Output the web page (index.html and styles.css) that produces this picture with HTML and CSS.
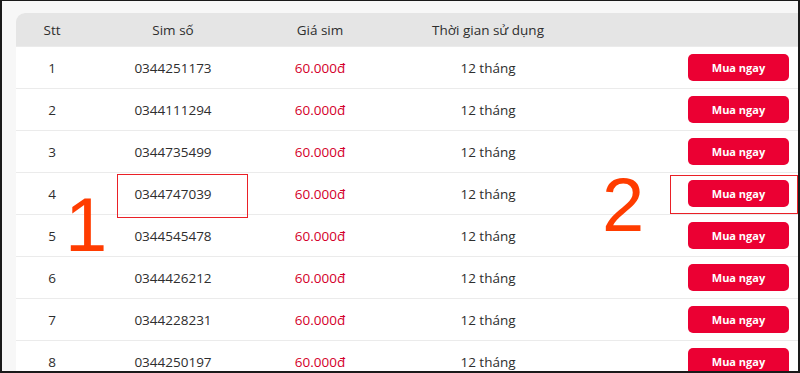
FILE: index.html
```html
<!DOCTYPE html>
<html lang="vi">
<head>
<meta charset="utf-8">
<link rel="stylesheet" href="styles.css">
</head>
<body>
<div class="frame">
  <div class="card">
    <div class="row head">
      <div class="c">Stt</div>
      <div class="c">Sim số</div>
      <div class="c">Giá sim</div>
      <div class="c">Thời gian sử dụng</div>
      <div class="c"></div>
    </div>
    <div class="row"><div class="c">1</div><div class="c">0344251173</div><div class="c price">60.000đ</div><div class="c">12 tháng</div><div class="c act"><span class="btn">Mua ngay</span></div></div>
    <div class="row"><div class="c">2</div><div class="c">0344111294</div><div class="c price">60.000đ</div><div class="c">12 tháng</div><div class="c act"><span class="btn">Mua ngay</span></div></div>
    <div class="row"><div class="c">3</div><div class="c">0344735499</div><div class="c price">60.000đ</div><div class="c">12 tháng</div><div class="c act"><span class="btn">Mua ngay</span></div></div>
    <div class="row"><div class="c">4</div><div class="c">0344747039</div><div class="c price">60.000đ</div><div class="c">12 tháng</div><div class="c act"><span class="btn">Mua ngay</span></div></div>
    <div class="row"><div class="c">5</div><div class="c">0344545478</div><div class="c price">60.000đ</div><div class="c">12 tháng</div><div class="c act"><span class="btn">Mua ngay</span></div></div>
    <div class="row"><div class="c">6</div><div class="c">0344426212</div><div class="c price">60.000đ</div><div class="c">12 tháng</div><div class="c act"><span class="btn">Mua ngay</span></div></div>
    <div class="row"><div class="c">7</div><div class="c">0344228231</div><div class="c price">60.000đ</div><div class="c">12 tháng</div><div class="c act"><span class="btn">Mua ngay</span></div></div>
    <div class="row"><div class="c">8</div><div class="c">0344250197</div><div class="c price">60.000đ</div><div class="c">12 tháng</div><div class="c act"><span class="btn">Mua ngay</span></div></div>
  </div>
  <div class="mark box1"></div>
  <div class="mark box2"></div>
  <div class="num n1">1</div>
  <div class="num n2">2</div>
</div>
</body>
</html>
```

FILE: styles.css
```css
* { box-sizing: border-box; }
html, body { margin: 0; padding: 0; background: #fff; }
.frame {
  position: relative;
  width: 800px;
  height: 373px;
  overflow: hidden;
  background: #f7f7f7;
  border: 2px solid #1a1a1a;
  border-top-width: 1px;
  padding: 12px 0 0 14px;
  font-family: "Open Sans", "Noto Sans", sans-serif;
  font-size: 13.5px;
  color: #2e2e2e;
}
.card {
  background: #fff;
  border-radius: 9px 0 0 0;
  overflow: hidden;
}
.row {
  display: grid;
  grid-template-columns: 72px 170px 124px 212px 1fr;
  height: 42px;
  align-items: center;
  border-top: 1px solid #ebebeb;
}
.row.head {
  height: 33px;
  background: #e5e5e5;
  border-top: none;
}
.c { text-align: center; }
.price { color: #d4002a; }
.act {
  display: flex;
  justify-content: flex-end;
  padding-right: 9px;
}
.btn {
  display: inline-flex;
  align-items: center;
  justify-content: center;
  width: 101px;
  height: 27px;
  border-radius: 5px;
  background: #eb0033;
  color: #fff;
  font-size: 11px;
  font-weight: 700;
}
.mark {
  position: absolute;
  border: 1.5px solid #ea2027;
}
.box1 { left: 115px; top: 173px; width: 131px; height: 44px; }
.box2 { left: 668px; top: 174px; width: 128px; height: 39px; }
.num {
  position: absolute;
  font-family: "Liberation Sans", Arial, sans-serif;
  color: #ff3c00;
  font-size: 76px;
  line-height: 1;
}
.n1 { left: 63px; top: 186px; }
.n2 { left: 600px; top: 166px; }
```
